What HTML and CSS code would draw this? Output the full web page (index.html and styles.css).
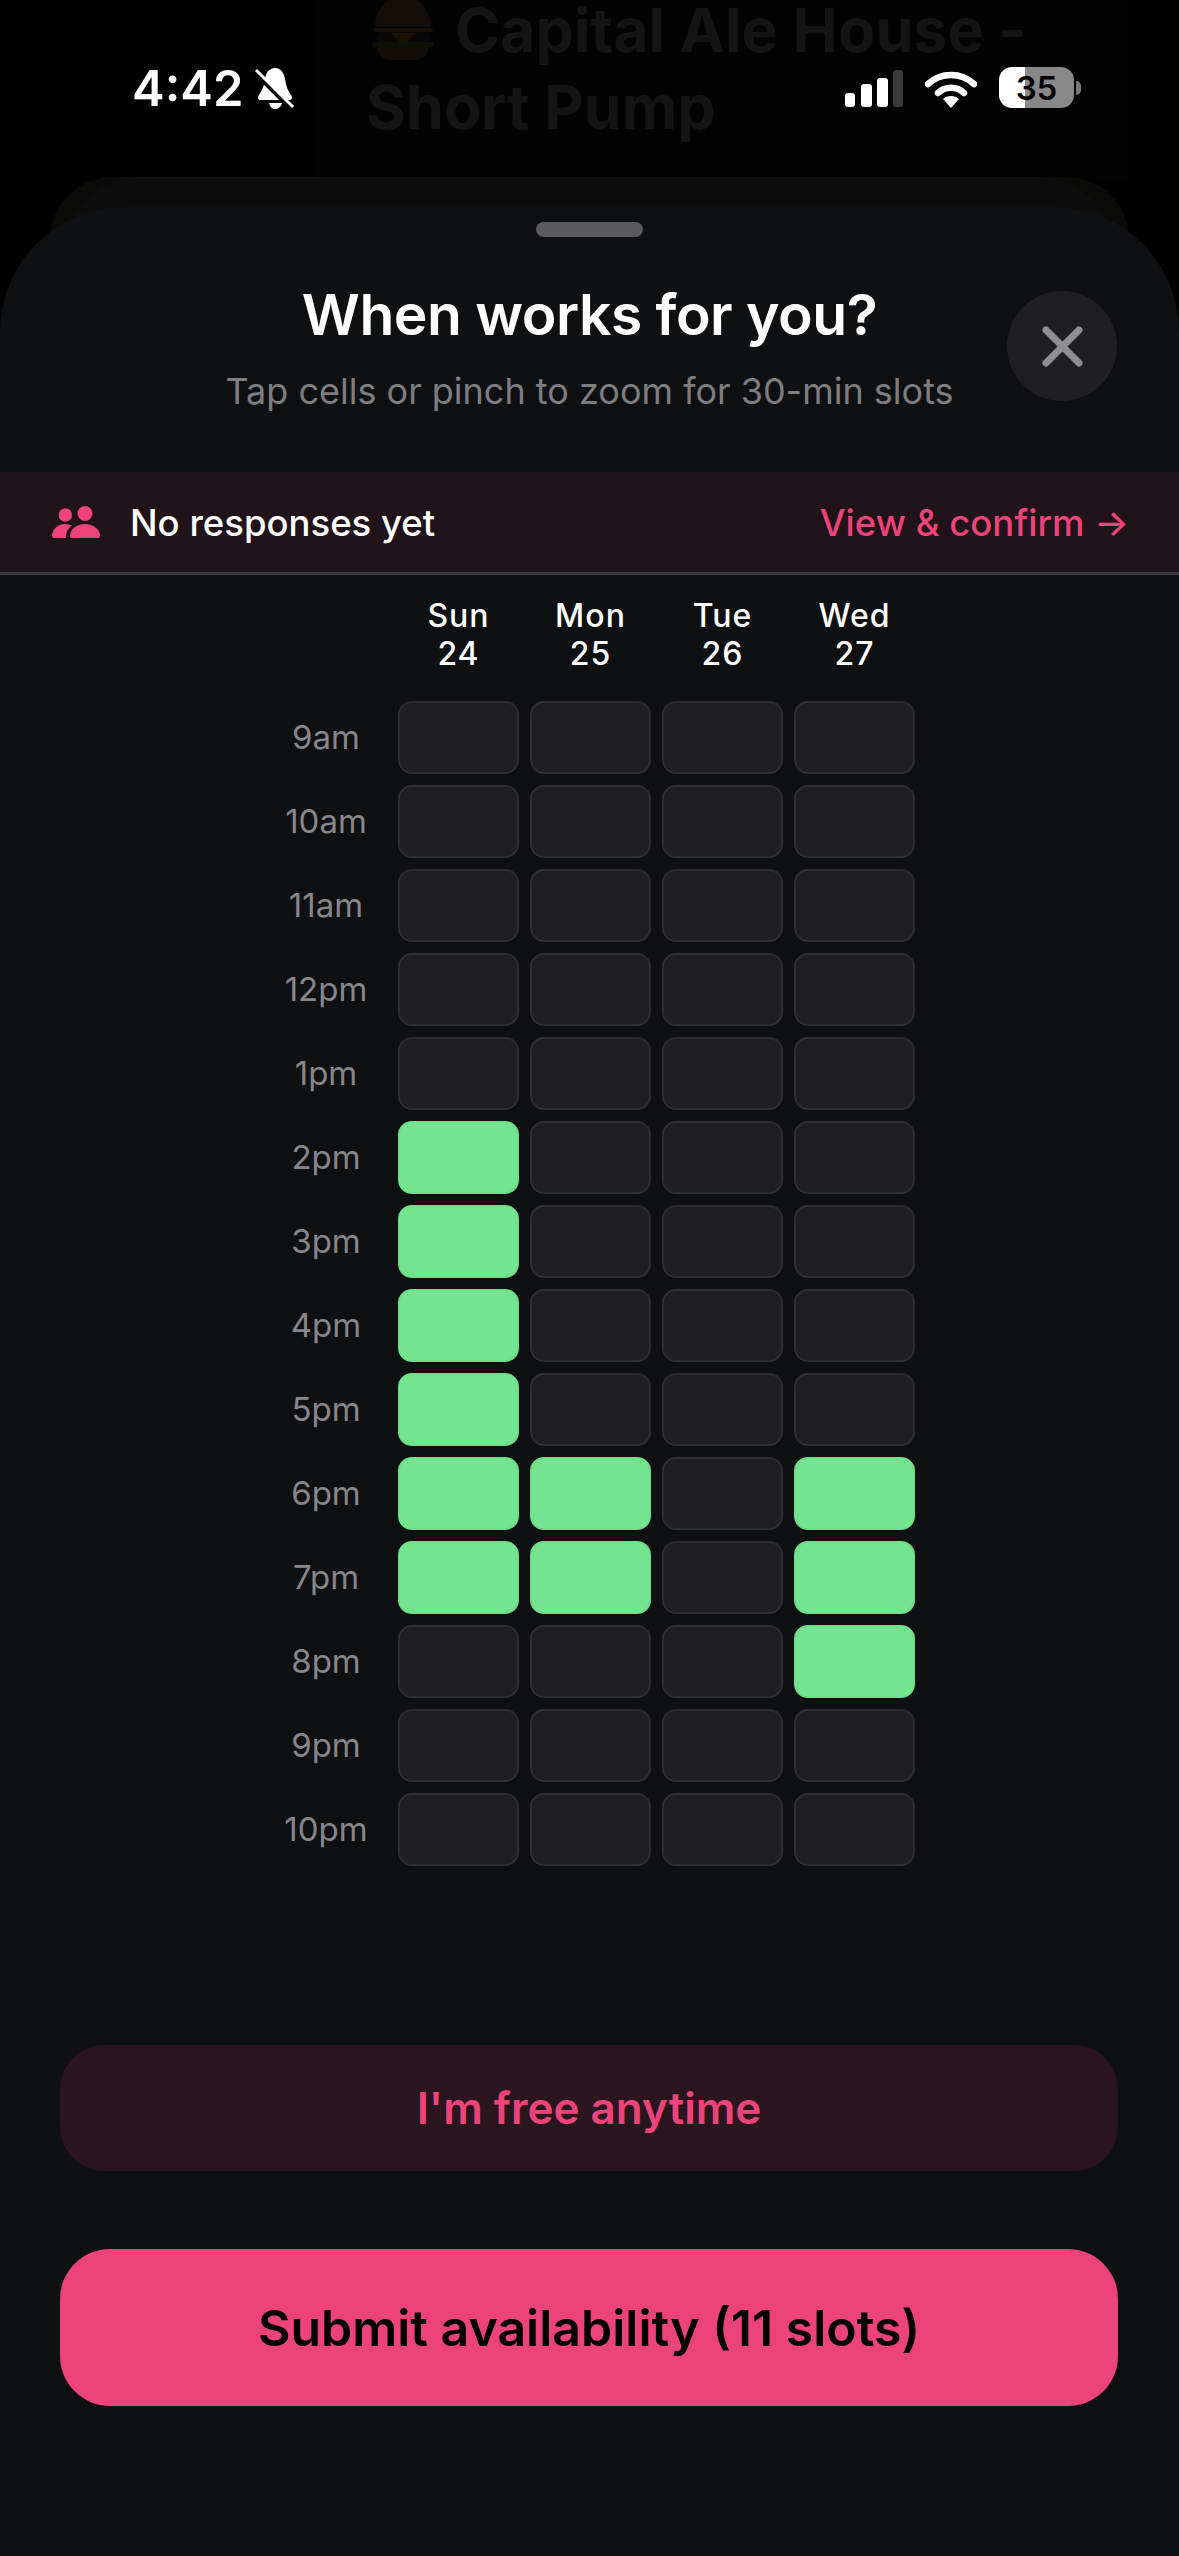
FILE: index.html

```html
<!DOCTYPE html>
<html>
<head>
    <meta charset="UTF-8">
    <title>When works for you?</title>
    <link rel="stylesheet" href="styles.css">
</head>
<body>
<div class="screen">
    <div class="backdrop">
        <div class="backdrop-panel"></div>
        <svg class="burger" width="62" height="60" viewBox="0 0 62 60">
            <path d="M3 27C3 8 16 -4 31 -4S59 8 59 27Z" fill="#140d09"/>
            <rect x="1" y="28" width="60" height="4" rx="2" fill="#1a0e08"/>
            <rect x="4" y="32" width="54" height="11" rx="5" fill="#0a0807"/>
            <path d="M18 33H44L31 45Z" fill="#171204"/>
            <rect x="0" y="42" width="62" height="5" rx="2.5" fill="#0e1206"/>
            <path d="M5 47H57C57 54 51 60 44 60H18C11 60 5 54 5 47Z" fill="#130c07"/>
        </svg>
        <div class="backdrop-title">
            <div class="backdrop-line1">Capital Ale House -</div>
            <div class="backdrop-line2">Short Pump</div>
        </div>
        <div class="backdrop-glow"></div>
        <div class="backdrop-sheet"></div>
    </div>

    <div class="statusbar">
        <div class="status-left">
            <span class="time">4:42</span>
            <svg width="40" height="43" viewBox="0 0 40 43">
                <path d="M20 1C26 1 29 6 30 12C31 19 33 24 36 28C38 31 37 33 34 33H6C3 33 2 31 4 28C7 24 9 19 10 12C11 6 14 1 20 1Z" fill="#fff"/>
                <path d="M14 36H27C26 40 23 42 20 42S15 40 14 36Z" fill="#fff"/>
                <path d="M0 6L36 42" stroke="#000" stroke-width="4"/>
                <path d="M1 3L38 40" stroke="#fff" stroke-width="3"/>
            </svg>
        </div>
        <div class="status-right">
            <svg width="58" height="37" viewBox="0 0 58 37">
                <rect x="0" y="23" width="10" height="14" rx="3" fill="#fff"/>
                <rect x="16" y="14" width="11" height="23" rx="3" fill="#fff"/>
                <rect x="32" y="8" width="11" height="29" rx="3" fill="#fff"/>
                <rect x="48" y="0" width="10" height="37" rx="3" fill="#3a3a3a"/>
            </svg>
            <svg width="52" height="38" viewBox="0 0 52 38">
                <path d="M3 14C16 2 36 2 49 14" fill="none" stroke="#fff" stroke-width="6.5" stroke-linecap="round"/>
                <path d="M13 23C20 16 32 16 39 23" fill="none" stroke="#fff" stroke-width="6.5" stroke-linecap="round"/>
                <path d="M18 29C22 25 30 25 34 29L26 38Z" fill="#fff"/>
            </svg>
            <div class="battery"><span class="battery-num">35</span></div>
            <div class="battery-nub"></div>
        </div>
    </div>

    <div class="sheet">
        <div class="handle"></div>
        <div class="sheet-head">
            <h1 class="title">When works for you?</h1>
            <p class="subtitle">Tap cells or pinch to zoom for 30-min slots</p>
            <div class="close">
                <svg width="41" height="41" viewBox="0 0 41 41">
                    <path d="M4 4L37 37M37 4L4 37" stroke="#8e8e93" stroke-width="7" stroke-linecap="round"/>
                </svg>
            </div>
        </div>

        <div class="banner">
            <div class="banner-left">
                <svg width="48" height="32" viewBox="0 0 48 32">
                    <circle cx="13.3" cy="9" r="6.7" fill="#ec447a"/>
                    <circle cx="33" cy="7.5" r="7.5" fill="#ec447a"/>
                    <path d="M18 30C18 23 25 18 33 18C41 18 48 23 48 30Q48 32 46 32H20Q18 32 18 30Z" fill="#ec447a"/>
                    <path d="M0 30C0 23 6 18 13 18Q17 18 20 19.5C16 22 14 26 14 32H2Q0 32 0 30Z" fill="#ec447a"/>
                </svg>
                <span class="banner-text">No responses yet</span>
            </div>
            <span class="banner-link">View &amp; confirm →</span>
        </div>

        <div class="grid">
            <div></div>
            <div class="day">Sun<br>24</div>
            <div class="day">Mon<br>25</div>
            <div class="day">Tue<br>26</div>
            <div class="day">Wed<br>27</div>

            <div class="hour">9am</div><div class="cell"></div><div class="cell"></div><div class="cell"></div><div class="cell"></div>
            <div class="hour">10am</div><div class="cell"></div><div class="cell"></div><div class="cell"></div><div class="cell"></div>
            <div class="hour">11am</div><div class="cell"></div><div class="cell"></div><div class="cell"></div><div class="cell"></div>
            <div class="hour">12pm</div><div class="cell"></div><div class="cell"></div><div class="cell"></div><div class="cell"></div>
            <div class="hour">1pm</div><div class="cell"></div><div class="cell"></div><div class="cell"></div><div class="cell"></div>
            <div class="hour">2pm</div><div class="cell on"></div><div class="cell"></div><div class="cell"></div><div class="cell"></div>
            <div class="hour">3pm</div><div class="cell on"></div><div class="cell"></div><div class="cell"></div><div class="cell"></div>
            <div class="hour">4pm</div><div class="cell on"></div><div class="cell"></div><div class="cell"></div><div class="cell"></div>
            <div class="hour">5pm</div><div class="cell on"></div><div class="cell"></div><div class="cell"></div><div class="cell"></div>
            <div class="hour">6pm</div><div class="cell on"></div><div class="cell on"></div><div class="cell"></div><div class="cell on"></div>
            <div class="hour">7pm</div><div class="cell on"></div><div class="cell on"></div><div class="cell"></div><div class="cell on"></div>
            <div class="hour">8pm</div><div class="cell"></div><div class="cell"></div><div class="cell"></div><div class="cell on"></div>
            <div class="hour">9pm</div><div class="cell"></div><div class="cell"></div><div class="cell"></div><div class="cell"></div>
            <div class="hour">10pm</div><div class="cell"></div><div class="cell"></div><div class="cell"></div><div class="cell"></div>
        </div>

        <div class="actions">
            <button class="btn-free">I'm free anytime</button>
            <button class="btn-submit">Submit availability (11 slots)</button>
        </div>
    </div>
</div>
</body>
</html>
```

FILE: styles.css

```css
* {
    box-sizing: border-box;
}
html, body {
    margin: 0;
    padding: 0;
    background: #000;
}
body {
    font-family: Inter, "Liberation Sans", sans-serif;
}
.screen {
    position: relative;
    width: 1179px;
    height: 2556px;
    overflow: hidden;
    padding-top: 207px;
}

/* dimmed page behind the sheet */
.backdrop {
    position: absolute;
    top: 0;
    left: 0;
    width: 1179px;
    height: 400px;
}
.backdrop-panel {
    position: absolute;
    top: 0;
    left: 316px;
    width: 812px;
    height: 180px;
    background: #030303;
}
.burger {
    position: absolute;
    top: 0;
    left: 372px;
}
.backdrop-title {
    position: absolute;
    top: 0;
    left: 366px;
    color: #141414;
    font-size: 61px;
    font-weight: 700;
    white-space: nowrap;
}
.backdrop-line1 {
    margin-left: 89px;
    line-height: 60px;
}
.backdrop-line2 {
    margin-top: 9px;
    line-height: 76px;
}
.backdrop-glow {
    position: absolute;
    top: 177px;
    left: 50px;
    width: 1079px;
    height: 120px;
    background: #0a0b07;
    border-radius: 62px 62px 0 0;
}
.backdrop-sheet {
    position: absolute;
    top: 177px;
    left: 62px;
    width: 1055px;
    height: 120px;
    background: #0d0d0e;
    border-radius: 80px 80px 0 0;
}

/* status bar */
.statusbar {
    position: absolute;
    top: 67px;
    left: 0;
    width: 1179px;
    padding: 0 98px 0 132px;
    display: flex;
    justify-content: space-between;
    align-items: flex-start;
}
.status-left {
    display: flex;
    align-items: center;
    gap: 12px;
    height: 43px;
}
.time {
    color: #fff;
    font-size: 49px;
    font-weight: 600;
    line-height: 43px;
}
.status-right {
    display: flex;
    align-items: center;
    height: 41px;
}
.status-right svg:first-child {
    margin: 2px 22px 0 0;
}
.status-right svg:nth-child(2) {
    margin: 2px 22px 0 0;
}
.battery {
    width: 75px;
    height: 41px;
    border-radius: 13px;
    background: linear-gradient(90deg, #fff 26px, #888 26px);
    display: flex;
    align-items: center;
    justify-content: center;
}
.battery-num {
    color: #000;
    font-size: 33px;
    font-weight: 600;
}
.battery-nub {
    width: 5px;
    height: 14px;
    margin-left: 2px;
    background: #777;
    border-radius: 0 7px 7px 0;
}

/* sheet */
.sheet {
    position: relative;
    height: 2349px;
    background: #0f1012;
    border-radius: 125px 125px 0 0;
    padding-top: 15px;
}
.handle {
    width: 107px;
    height: 15px;
    margin: 0 auto;
    background: #5a5a5f;
    border-radius: 8px;
}
.sheet-head {
    position: relative;
    height: 235px;
    padding-top: 40px;
    text-align: center;
}
.title {
    margin: 0;
    color: #fff;
    font-size: 57px;
    font-weight: 600;
    line-height: 76px;
    letter-spacing: -0.5px;
}
.subtitle {
    margin: 16px 0 0;
    color: #7d7d82;
    font-size: 36px;
    line-height: 44px;
}
.close {
    position: absolute;
    top: 54px;
    right: 62px;
    width: 110px;
    height: 110px;
    border-radius: 50%;
    background: #1f1f23;
    display: flex;
    align-items: center;
    justify-content: center;
}
.banner {
    height: 103px;
    padding: 2px 50px 0 52px;
    background: #201319;
    border-bottom: 3px solid #3a3a3c;
    display: flex;
    align-items: center;
    justify-content: space-between;
}
.banner-left {
    display: flex;
    align-items: center;
    gap: 30px;
}
.banner-left svg {
    margin-top: -2px;
}
.banner-text {
    color: #fff;
    font-size: 36.5px;
    font-weight: 500;
}
.banner-link {
    color: #ec447a;
    font-size: 36.5px;
    font-weight: 500;
}

/* availability grid */
.grid {
    display: grid;
    grid-template-columns: 122px repeat(4, 121px);
    grid-template-rows: 93px;
    grid-auto-rows: 73px;
    column-gap: 11px;
    row-gap: 11px;
    margin-top: 22px;
    padding-left: 265px;
}
.day {
    color: #fff;
    font-size: 32px;
    font-weight: 500;
    letter-spacing: 1px;
    line-height: 38px;
    text-align: center;
}
.hour {
    color: #86868b;
    font-size: 33px;
    line-height: 73px;
    text-align: center;
}
.cell {
    background: #1f1f23;
    border: 2px solid #2e2e32;
    border-radius: 14px;
}
.cell.on {
    background: #73e58f;
    border-color: #6fdd8a;
}

/* buttons */
.actions {
    margin-top: 179px;
    padding: 0 61px 0 60px;
    display: flex;
    flex-direction: column;
    gap: 78px;
}
.actions button {
    width: 100%;
    border: 0;
    font-family: inherit;
}
.btn-free {
    height: 126px;
    background: #2a161e;
    border-radius: 44px;
    color: #ec447a;
    font-size: 44px;
    font-weight: 600;
}
.btn-submit {
    height: 157px;
    background: #ec447a;
    border-radius: 50px;
    color: #000;
    font-size: 50px;
    font-weight: 600;
}
```
